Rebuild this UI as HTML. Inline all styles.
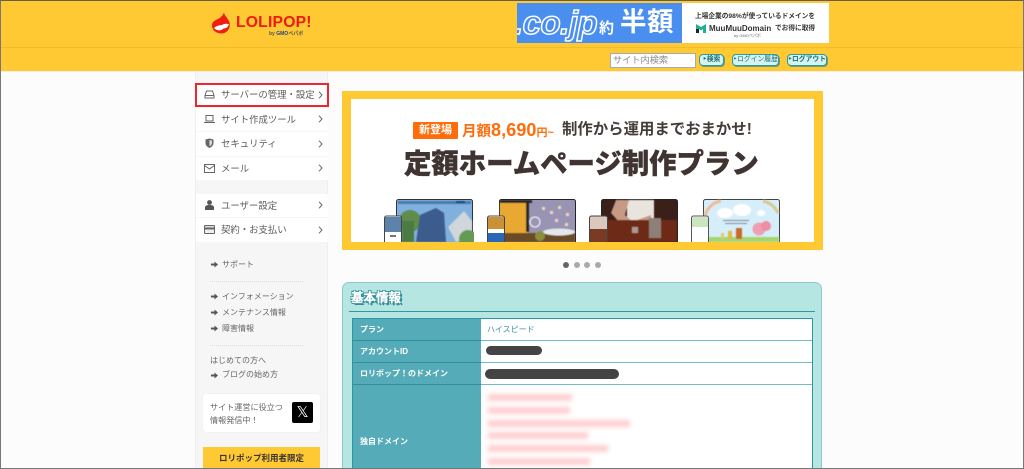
<!DOCTYPE html>
<html lang="ja"><head><meta charset="utf-8"><title>LOLIPOP!</title>
<style>
html,body{margin:0;padding:0;background:#fcfcfc;width:1024px;height:469px;overflow:hidden}
#w{position:relative;width:1024px;height:469px;overflow:hidden;font-family:"Liberation Sans","Noto Sans CJK JP",sans-serif;color:#555;background:#fcfcfc}
.a{position:absolute;white-space:nowrap}
.m{position:absolute;left:196px;width:132px;background:#fff}
.mt{position:absolute;left:221px;font-size:9.4px;line-height:14px;color:#5f5a58;white-space:nowrap}
.ch{position:absolute;left:318px}
.s{position:absolute;left:222px;font-size:8px;line-height:12px;color:#666;white-space:nowrap}
.ar{position:absolute;left:211px;width:7px;height:7px}
.th{position:absolute;left:360px;font-size:8px;font-weight:bold;color:#fff;line-height:12px;white-space:nowrap}
.btn{position:absolute;top:54px;height:10px;border:1px solid #2d9aa0;border-radius:4px;background:#d4f3f1;box-shadow:1px 1px 0 #7b9a6a;font-size:6.800px;line-height:10px;color:#1d6f78;text-align:center;font-weight:bold;white-space:nowrap;overflow:hidden}
.pk{position:absolute;left:488px;height:7px;background:#ff9da3;filter:blur(2.5px);opacity:.5}
.d{position:absolute}
</style></head><body><div id="w">
<!-- header -->
<div class="a" style="left:0;top:0;width:1024px;height:71px;background:#ffc933"></div>
<div class="a" style="left:0;top:47px;width:1024px;height:1px;background:#f2bb2c"></div>
<div class="a" style="left:0;top:71px;width:1024px;height:1px;background:#f1efe8"></div>
<!-- logo -->
<svg class="a" style="left:211px;top:12px" width="24" height="24" viewBox="0 0 24 24"><path d="M13 0.500C13.500 4 17 6 18.500 10.500C20 16 16 21.500 10.500 21.500C5 21.500 1 18 1 13.500C1 9 5 8 8 6.500C10.500 5 12 3 13 0.500Z" fill="#f01e10"/><path d="M3 16C6 13 10 13.500 12 12.500C14 11.500 16.500 11.500 18 12.500C17 15 15 16.500 12.500 16.500C10.500 19 5.500 19 3 16Z" fill="#fff"/></svg>
<div class="a" style="left:236px;top:13px;font-size:15.700px;line-height:20px;font-weight:bold;color:#ef1c0e;letter-spacing:.2px">LOLIPOP!</div>
<div class="a" style="left:269px;top:31px;font-size:5px;line-height:6px;color:#555;font-weight:bold">by <span style="color:#24408e">GMO</span>ペパボ</div>
<!-- ad -->
<div class="a" style="left:517px;top:3px;width:165px;height:40px;background:#4a8ff0;overflow:hidden">
<div class="a" style="left:-3px;top:0;font-size:33px;line-height:40px;font-style:italic;font-weight:bold;color:#4a8ff0;-webkit-text-stroke:1.500px #fff;letter-spacing:-.5px">.co.jp</div>
<div class="a" style="left:82px;top:15px;font-size:15px;line-height:22px;font-weight:bold;color:#fff">約</div>
<div class="a" style="left:103px;top:3px;font-size:26.500px;line-height:32px;font-weight:bold;color:#fff;letter-spacing:.5px">半額</div>
</div>
<div class="a" style="left:682px;top:3px;width:147px;height:40px;background:#fff"></div>
<div class="a" style="left:695px;top:12px;font-size:6.700px;line-height:9px;color:#333;font-weight:bold">上場企業の98%が使っているドメインを</div>
<svg class="a" style="left:696px;top:24px" width="10" height="9" viewBox="0 0 10 9"><path d="M0 0L5 3L10 0V9H7V5L5 6.500L3 5V9H0Z" fill="#1faf96"/><rect x="0" y="5" width="3" height="4" fill="#222"/></svg>
<div class="a" style="left:709px;top:23px;font-size:8px;line-height:11px;font-weight:bold;color:#333">MuuMuuDomain</div>
<div class="a" style="left:775px;top:24px;font-size:6.700px;line-height:9px;color:#333;font-weight:bold">でお得に取得</div>
<div class="a" style="left:734px;top:33px;font-size:4px;line-height:5px;color:#666">by GMOペパボ</div>
<!-- search -->
<div class="a" style="left:610px;top:53px;width:84px;height:13px;background:#fff;border:1px solid #aaa;font-size:9.200px;line-height:13px;color:#8a8a8a;text-indent:2px;overflow:hidden">サイト内検索</div>
<div class="btn" style="left:699px;width:23px">‣検索</div>
<div class="btn" style="left:732px;width:45px;font-weight:normal">‣ログイン履歴</div>
<div class="btn" style="left:787px;width:38px">‣ログアウト</div>
<!-- sidebar -->
<div class="a" style="left:195px;top:72px;width:133px;height:397px;background:#f6f6f6;border-left:1px solid #eee;border-right:1px solid #eee;box-sizing:border-box"></div>
<div class="m" style="top:108px;height:23px"></div><div class="m" style="top:132px;height:24px"></div><div class="m" style="top:157px;height:23px"></div>
<div class="m" style="top:194px;height:23px"></div><div class="m" style="top:218px;height:24px"></div>
<div class="a" style="left:195px;top:83px;width:130px;height:20px;background:#fff;border:2px solid #ee2630"></div>

<svg class="a" style="left:204px;top:90px" width="11" height="9" viewBox="0 0 11 9" fill="none" stroke="#666"><path d="M2.500 1H8.500L10 5.500V8H1V5.500ZM1 5.500H10"/></svg>
<svg class="a" style="left:204px;top:114px" width="11" height="10" viewBox="0 0 11 10" fill="none" stroke="#666"><path d="M2 1.500H9V7H2ZM0 8.500H11"/></svg>
<svg class="a" style="left:205px;top:138px" width="9" height="10" viewBox="0 0 9 10"><path d="M0.500 1.500L4.500 0.500L8.500 1.500V5C8.500 7.500 6.500 9 4.500 10C2.500 9 0.500 7.500 0.500 5Z" fill="#666"/><path d="M4.500 2V8.300C6 7.500 7 6.500 7 5V2.500Z" fill="#ddd"/></svg>
<svg class="a" style="left:204px;top:164px" width="11" height="9" viewBox="0 0 11 9" fill="none" stroke="#666"><path d="M.5.500H10.500V8.500H.5ZM.5 1.500L5.500 5L10.500 1.500"/></svg>
<svg class="a" style="left:205px;top:200px" width="9" height="10" viewBox="0 0 9 10" fill="#555"><circle cx="4.500" cy="2.500" r="2.400"/><path d="M0 10V7.500C0 5.500 2 5 4.500 5S9 5.500 9 7.500V10Z"/></svg>
<svg class="a" style="left:204px;top:225px" width="11" height="9" viewBox="0 0 11 9"><rect width="11" height="9" rx="1" fill="#666"/><rect x="1" y="1" width="9" height="1.500" fill="#ddd"/><rect x="1" y="4.500" width="9" height="3.500" fill="#eee"/></svg>

<div class="mt" style="top:88px">サーバーの管理・設定</div>
<div class="mt" style="top:113px">サイト作成ツール</div>
<div class="mt" style="top:137px">セキュリティ</div>
<div class="mt" style="top:162px">メール</div>
<div class="mt" style="top:199px">ユーザー設定</div>
<div class="mt" style="top:223px">契約・お支払い</div>
<svg class="ch" style="top:91px" width="5" height="8" viewBox="0 0 5 8" fill="none" stroke="#666"><path d="M1 .7L4 4L1 7.300"/></svg>
<svg class="ch" style="top:115px" width="5" height="8" viewBox="0 0 5 8" fill="none" stroke="#666"><path d="M1 .7L4 4L1 7.300"/></svg>
<svg class="ch" style="top:140px" width="5" height="8" viewBox="0 0 5 8" fill="none" stroke="#666"><path d="M1 .7L4 4L1 7.300"/></svg>
<svg class="ch" style="top:164px" width="5" height="8" viewBox="0 0 5 8" fill="none" stroke="#666"><path d="M1 .7L4 4L1 7.300"/></svg>
<svg class="ch" style="top:201px" width="5" height="8" viewBox="0 0 5 8" fill="none" stroke="#666"><path d="M1 .7L4 4L1 7.300"/></svg>
<svg class="ch" style="top:226px" width="5" height="8" viewBox="0 0 5 8" fill="none" stroke="#666"><path d="M1 .7L4 4L1 7.300"/></svg>

<svg class="ar" style="top:261px" viewBox="0 0 7 7"><path d="M3.500 0.500L7 3.500L3.500 6.500V4.500H0V2.500H3.500Z" fill="#555"/></svg>
<div class="s" style="top:259px">サポート</div>
<div class="a" style="left:210px;top:281px;width:93px;border-top:1px dotted #ddd"></div>
<svg class="ar" style="top:293px" viewBox="0 0 7 7"><path d="M3.500 0.500L7 3.500L3.500 6.500V4.500H0V2.500H3.500Z" fill="#555"/></svg>
<div class="s" style="top:291px">インフォメーション</div>
<svg class="ar" style="top:309px" viewBox="0 0 7 7"><path d="M3.500 0.500L7 3.500L3.500 6.500V4.500H0V2.500H3.500Z" fill="#555"/></svg>
<div class="s" style="top:307px">メンテナンス情報</div>
<svg class="ar" style="top:325px" viewBox="0 0 7 7"><path d="M3.500 0.500L7 3.500L3.500 6.500V4.500H0V2.500H3.500Z" fill="#555"/></svg>
<div class="s" style="top:323px">障害情報</div>
<div class="a" style="left:210px;top:345px;width:93px;border-top:1px dotted #ddd"></div>
<div class="s" style="left:210px;top:355px">はじめての方へ</div>
<svg class="ar" style="top:372px" viewBox="0 0 7 7"><path d="M3.500 0.500L7 3.500L3.500 6.500V4.500H0V2.500H3.500Z" fill="#555"/></svg>
<div class="s" style="top:369px">ブログの始め方</div>

<div class="a" style="left:203px;top:394px;width:117px;height:38px;background:#fff;border-radius:3px;box-shadow:0 0 1px #ddd"></div>
<div class="a" style="left:210px;top:402px;font-size:8.100px;line-height:12.500px;color:#666">サイト運営に役立つ<br>情報発信中！</div>
<div class="a" style="left:292px;top:402px;width:21px;height:21px;background:#000;border-radius:2px;color:#fff;font-size:15px;line-height:21px;text-align:center">𝕏</div>
<div class="a" style="left:203px;top:447px;width:117px;height:22px;background:#ffc933;text-align:center;font-size:8.500px;line-height:22px;font-weight:bold;color:#3b3330">ロリポップ利用者限定</div>

<!-- banner -->
<div class="a" style="left:342px;top:91px;width:481px;height:159px;background:#ffc933"></div>
<div class="a" style="left:351px;top:99px;width:463px;height:143px;background:#fff;overflow:hidden"></div>
<div class="a" style="left:413px;top:122px;width:45px;height:17px;background:#ff6d0a;border-radius:1px;color:#fff;font-size:11px;line-height:17px;text-align:center;font-weight:bold">新登場</div>
<div class="a" style="left:462px;top:120px;font-size:14.500px;line-height:20px;font-weight:bold;color:#ff6d0a">月額<span style="font-size:18px;letter-spacing:.1px">8,690</span><span style="font-size:11px">円~</span></div>
<div class="a" style="left:562px;top:120px;font-size:15.400px;line-height:20px;font-weight:bold;color:#453b38">制作から運用までおまかせ!</div>
<div class="a" style="left:404px;top:146px;font-size:27.400px;line-height:36px;font-weight:900;color:#3f3431;-webkit-text-stroke:.4px #3f3431">定額ホームページ制作プラン</div>

<!-- device mockups -->
<svg class="d" style="left:384px;top:199px" width="90" height="43" viewBox="0 0 90 43">
<defs><filter id="b"><feGaussianBlur stdDeviation=".6"/></filter></defs>
<rect x="12.500" y=".5" width="76" height="44" rx="2" fill="#7fb0de" stroke="#333"/>
<g filter="url(#b)"><circle cx="26" cy="22" r="11" fill="#5e8c4c"/><rect x="18" y="22" width="12" height="21" fill="#4c7a42"/><path d="M36 16L52 9L60 14L62 43H32Z" fill="#3a5c8c"/><path d="M64 28L80 12L88 22V38L72 43Z" fill="#cfd6dc"/><circle cx="84" cy="40" r="9" fill="#659a52"/><rect x="14" y="2" width="73" height="3" fill="#4c7ba8"/><rect x="72" y="2" width="9" height="2" fill="#1c3f85"/></g>
<rect x=".5" y="17" width="17" height="30" rx="2" fill="#fff" stroke="#444"/>
<rect x="1" y="18" width="16" height="15" fill="#5d83ac"/><rect x="6" y="36" width="6" height="2" fill="#777"/>
</svg>
<svg class="d" style="left:487px;top:199px" width="90" height="43" viewBox="0 0 90 43">
<rect x="12.500" y=".5" width="76" height="44" rx="2" fill="#9a94b4" stroke="#222"/>
<g filter="url(#b)"><rect x="13" y="1" width="28" height="36" fill="#e8a830"/><rect x="13" y="1" width="32" height="3" fill="#2a2520"/><rect x="39" y="3" width="3" height="30" fill="#2a2520"/><path d="M55 8h3v3h-3zM63 12h3v3h-3zM71 7h3v3h-3zM79 14h3v3h-3zM68 20h3v3h-3zM78 24h3v3h-3z" fill="#f0d9b5"/><rect x="13" y="34" width="75" height="9" fill="#6a4c28"/><ellipse cx="72" cy="33" rx="16" ry="3.500" fill="#e4e8ec"/><circle cx="48" cy="23" r="5" fill="none" stroke="#fff"/><circle cx="53" cy="37" r="5" fill="#8a8f3a"/></g>
<rect x=".5" y="17" width="17" height="30" rx="2" fill="#fff" stroke="#444"/>
<rect x="1" y="18" width="16" height="12" fill="#c99236"/><rect x="1" y="34" width="16" height="9" fill="#2a67b5"/>
</svg>
<svg class="d" style="left:589px;top:199px" width="90" height="43" viewBox="0 0 90 43">
<rect x="12.500" y=".5" width="76" height="44" rx="2" fill="#3a2018" stroke="#222"/>
<g filter="url(#b)"><rect x="38" y="1" width="27" height="21" fill="#e9e4dd"/><path d="M27 1H40L36 16L44 23L30 23L22 14Z" fill="#c69a84"/><path d="M48 21L62 16L62 23H48Z" fill="#c69a84"/><rect x="13" y="21" width="75" height="22" fill="#6d2a12"/><rect x="60" y="19" width="12" height="20" fill="#8d8078"/><rect x="43" y="28" width="6" height="6" fill="#a89a90"/></g>
<rect x=".5" y="17" width="18" height="30" rx="2" fill="#dac8bc" stroke="#444"/>
<rect x="1" y="30" width="17" height="13" fill="#7a3b24"/>
</svg>
<svg class="d" style="left:691px;top:199px" width="90" height="43" viewBox="0 0 90 43">
<rect x="12.500" y=".5" width="76" height="44" rx="2" fill="#d6eefa" stroke="#444"/>
<g filter="url(#b)"><path d="M14 16C18 6 24 3 30 2" fill="none" stroke="#f2b98f" stroke-width="3"/><path d="M72 2C80 4 84 8 87 14" fill="none" stroke="#d8c98f" stroke-width="3"/><ellipse cx="34" cy="14" rx="8" ry="5" fill="#fff"/><ellipse cx="51" cy="11" rx="9" ry="6" fill="#fff"/><ellipse cx="70" cy="14" rx="4" ry="3" fill="#fff"/><rect x="13" y="38" width="75" height="5" fill="#a6d46e"/><circle cx="68" cy="30" r="6.500" fill="#ef9fb3"/><circle cx="75" cy="27" r="5" fill="#ee8da6"/><rect x="45" y="29" width="6" height="11" fill="#c86a2c"/><rect x="37" y="32" width="4" height="8" fill="#e6b840"/><rect x="30" y="34" width="3" height="6" fill="#d9cd6d"/><rect x="32" y="21" width="26" height="1" fill="#7d8a96"/><rect x="34" y="24" width="22" height="1" fill="#7d8a96"/></g>
<rect x=".5" y="17" width="17" height="30" rx="2" fill="#fff" stroke="#555"/>
<rect x="1" y="18" width="16" height="10" fill="#c9e6c0"/>
</svg>
<div class="a" style="left:342px;top:242px;width:481px;height:8px;background:#ffc933"></div>

<!-- dots -->
<div class="a" style="left:563px;top:262px;width:6px;height:6px;border-radius:50%;background:#666"></div>
<div class="a" style="left:574px;top:262px;width:6px;height:6px;border-radius:50%;background:#aaa"></div>
<div class="a" style="left:584px;top:262px;width:6px;height:6px;border-radius:50%;background:#aaa"></div>
<div class="a" style="left:595px;top:262px;width:6px;height:6px;border-radius:50%;background:#aaa"></div>

<!-- panel -->
<div class="a" style="left:342px;top:282px;width:480px;height:200px;background:#b5e6e1;border:1px solid #8ccac8;border-radius:7px;box-sizing:border-box"></div>
<div class="a" style="left:351px;top:291px;font-size:12.500px;line-height:15px;font-weight:bold;color:#fff;-webkit-text-stroke:.3px #fff;text-shadow:1px 1px 0 #2c8f99,-1px 1px 0 #2c8f99,1px -1px 0 #2c8f99,-1px -1px 0 #2c8f99,2px 2px 0 #2c8f99">基本情報</div>
<div class="a" style="left:349px;top:311px;width:466px;height:1px;background:#2f9aa3"></div>
<div class="a" style="left:352px;top:318px;width:461px;height:160px;background:#fff;border:1px solid #2a97a3;box-sizing:border-box"></div>
<div class="a" style="left:353px;top:319px;width:128px;height:150px;background:#56abb9"></div>
<div class="a" style="left:353px;top:340px;width:459px;height:1px;background:#74bcc4"></div>
<div class="a" style="left:353px;top:362px;width:459px;height:1px;background:#74bcc4"></div>
<div class="a" style="left:353px;top:384px;width:459px;height:1px;background:#74bcc4"></div>
<div class="a" style="left:353px;top:340px;width:128px;height:1px;background:#2f8f9c"></div>
<div class="a" style="left:353px;top:362px;width:128px;height:1px;background:#2f8f9c"></div>
<div class="a" style="left:353px;top:384px;width:128px;height:1px;background:#2f8f9c"></div>
<div class="th" style="top:324px">プラン</div>
<div class="th" style="top:346px">アカウントID</div>
<div class="th" style="top:368px">ロリポップ！のドメイン</div>
<div class="th" style="top:436px">独自ドメイン</div>
<div class="a" style="left:487px;top:324px;font-size:8px;line-height:12px;color:#3a93a0">ハイスピード</div>
<div class="a" style="left:486px;top:346px;width:56px;height:9px;border-radius:5px;background:#444"></div>
<div class="a" style="left:485px;top:369px;width:134px;height:10px;border-radius:5px;background:#444"></div>
<div class="pk" style="top:394px;width:84px"></div>
<div class="pk" style="top:407px;width:82px"></div>
<div class="pk" style="top:420px;width:142px"></div>
<div class="pk" style="top:432px;width:100px"></div>
<div class="pk" style="top:445px;width:120px"></div>
<div class="pk" style="top:458px;width:102px"></div>

<!-- frame -->
<div class="a" style="left:0;top:0;width:1024px;height:469px;box-sizing:border-box;border:1px solid #777;border-top-color:#665f4e;pointer-events:none"></div>
</div></body></html>
